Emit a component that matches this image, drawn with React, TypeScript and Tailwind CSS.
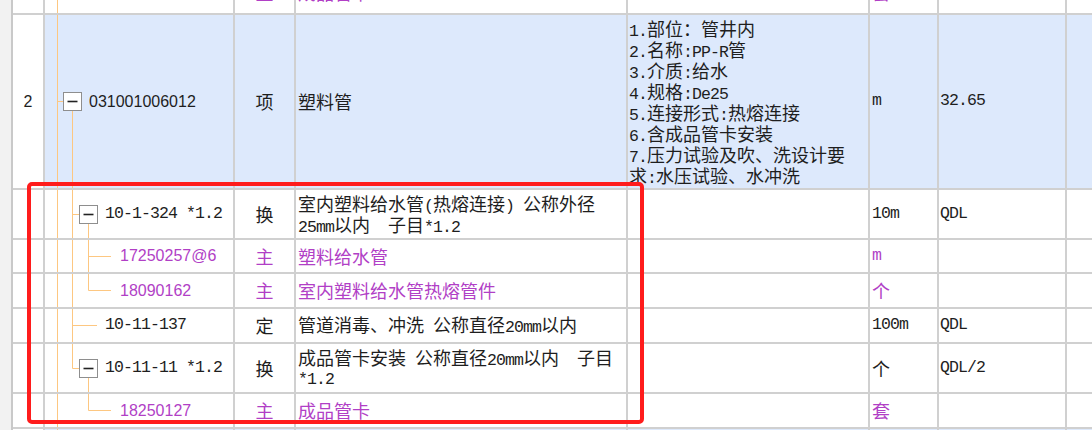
import React from 'react';

const PURPLE = 'text-[#b13fc6]';
const INK = 'text-[#1e1e1e]';
const MONO = "font-['Liberation_Mono',monospace] text-[16.5px] tracking-[-0.9px]";
const SANS = "font-['Liberation_Sans',Arial,sans-serif] text-[16px]";
const CJK = "font-['Noto_Sans_CJK_SC',sans-serif] text-[18px]";
const LINE = '#fdc781';

// ascii runs in SimSun-like mono, everything else in the CJK face
function Mix({ text }: { text: string }) {
    const parts = text.match(/[\x00-\x7f]+|[^\x00-\x7f]+/g) ?? [];
    return (
        <>
            {parts.map((p, i) => (
                <span key={i} className={/^[\x00-\x7f]/.test(p) ? MONO : CJK}>
                    {p}
                </span>
            ))}
        </>
    );
}

type V = [number, 'full' | 'top' | 'bottom'];
type TreeProps = {
    w: number;
    h: number;
    v?: V[];
    hz?: [number, number];
    box?: number;
    children?: React.ReactNode;
};

function Tree({ w, h, v = [], hz, box, children }: TreeProps) {
    const c = Math.floor(h / 2) + 0.5;
    return (
        <div className="flex items-center h-full">
            <svg width={w} height={h} className="shrink-0">
                {v.map(([x, kind], i) => {
                    const y1 = kind === 'bottom' ? c + 9 : 0;
                    const y2 = kind === 'top' ? c : h;
                    return <line key={i} x1={x} x2={x} y1={y1} y2={y2} stroke={LINE} strokeWidth={1} />;
                })}
                {hz && <line x1={hz[0]} x2={hz[1]} y1={c} y2={c} stroke={LINE} strokeWidth={1} />}
                {box !== undefined && (
                    <g>
                        <rect x={box - 9} y={c - 9} width={18} height={18} fill="#fff" stroke="#8e8e8e" strokeWidth={1} />
                        <line x1={box - 5} x2={box + 5} y1={c} y2={c} stroke="#222" strokeWidth={1.6} />
                    </g>
                )}
            </svg>
            {children}
        </div>
    );
}

type RowProps = {
    h: string;
    blue?: boolean;
    extra?: string;
    num?: React.ReactNode;
    tree: React.ReactNode;
    type?: React.ReactNode;
    desc?: React.ReactNode;
    feat?: React.ReactNode;
    unit?: React.ReactNode;
    qty?: React.ReactNode;
};

function Row({ h, blue, extra = '', num, tree, type, desc, feat, unit, qty }: RowProps) {
    const bg = blue ? 'bg-[#dde9fc]' : 'bg-white';
    const cell = `h-full border-r-2 border-[#d0d0d0] ${bg}`;
    return (
        <div className={`flex shrink-0 border-b-2 border-[#d0d0d0] ${h} ${extra}`}>
            <div className={`w-[32px] shrink-0 h-full border-r-2 border-[#d0d0d0] bg-white flex items-center justify-center ${SANS} ${INK}`}>
                {num}
            </div>
            <div className={`w-[190px] shrink-0 ${cell}`}>{tree}</div>
            <div className={`w-[61px] shrink-0 flex items-center justify-center ${cell} ${CJK}`}>{type}</div>
            <div className={`w-[332px] shrink-0 flex items-center pl-[2px] leading-[21px] ${cell}`}>{desc}</div>
            <div className={`w-[242px] shrink-0 flex items-center pl-[1px] leading-[21px] ${cell}`}>{feat}</div>
            <div className={`w-[69px] shrink-0 flex items-center pl-[2px] ${cell}`}>{unit}</div>
            <div className={`w-[128px] shrink-0 flex items-center pl-[1px] ${cell} ${MONO} ${INK}`}>{qty}</div>
            <div className={`flex-1 h-full ${bg}`} />
        </div>
    );
}

const FEATURES = [
    '1.部位：管井内',
    '2.名称:PP-R管',
    '3.介质:给水',
    '4.规格:De25',
    '5.连接形式:热熔连接',
    '6.含成品管卡安装',
    '7.压力试验及吹、洗设计要',
    '求:水压试验、水冲洗',
];

export default function App() {
    return (
        <div className="relative w-[1092px] h-[430px] overflow-hidden bg-white flex">
            <div className="w-[13px] shrink-0 h-full bg-[#f2f2f2] border-r-2 border-[#c9c9c9]" />

            <div className="flex-1 flex flex-col">
                <Row
                    h="h-[43px]"
                    extra="-mt-[28px]"
                    tree={
                        <Tree w={75} h={41} v={[[12.5, 'full']]}>
                            <span className={`${SANS} ${PURPLE}`}>18250127</span>
                        </Tree>
                    }
                    type={<span className={PURPLE}>主</span>}
                    desc={<span className={`${CJK} ${PURPLE}`}>成品管卡</span>}
                    unit={<span className={`${CJK} ${PURPLE}`}>套</span>}
                />

                <Row
                    h="h-[175px]"
                    blue
                    num="2"
                    tree={
                        <Tree w={44} h={173} v={[[12.5, 'full'], [27.5, 'bottom']]} hz={[12.5, 18.5]} box={27.5}>
                            <span className={`${SANS} ${INK}`}>031001006012</span>
                        </Tree>
                    }
                    type={<span className={INK}>项</span>}
                    desc={<span className={`${CJK} ${INK}`}>塑料管</span>}
                    feat={
                        <div className={`flex flex-col whitespace-nowrap ${INK}`}>
                            {FEATURES.map((f) => (
                                <div key={f} className="h-[21px] leading-[21px]">
                                    <Mix text={f} />
                                </div>
                            ))}
                        </div>
                    }
                    unit={<span className={`${MONO} ${INK}`}>m</span>}
                    qty="32.65"
                />

                <Row
                    h="h-[50px]"
                    tree={
                        <Tree w={60} h={48} v={[[12.5, 'full'], [27.5, 'full'], [43.5, 'bottom']]} hz={[27.5, 34.5]} box={43.5}>
                            <span className={`${MONO} ${INK}`}>10-1-324 *1.2</span>
                        </Tree>
                    }
                    type={<span className={INK}>换</span>}
                    desc={
                        <div className={`flex flex-col whitespace-nowrap ${INK}`}>
                            <div className="h-[21px]">
                                <Mix text="室内塑料给水管(热熔连接) 公称外径" />
                            </div>
                            <div className="h-[21px]">
                                <Mix text="25mm以内　子目*1.2" />
                            </div>
                        </div>
                    }
                    unit={<span className={`${MONO} ${INK}`}>10m</span>}
                    qty="QDL"
                />

                <Row
                    h="h-[34px]"
                    tree={
                        <Tree w={75} h={32} v={[[12.5, 'full'], [27.5, 'full'], [43.5, 'full']]} hz={[43.5, 66]}>
                            <span className={`${SANS} ${PURPLE}`}>17250257@6</span>
                        </Tree>
                    }
                    type={<span className={PURPLE}>主</span>}
                    desc={<span className={`${CJK} ${PURPLE}`}>塑料给水管</span>}
                    unit={<span className={`${MONO} ${PURPLE}`}>m</span>}
                />

                <Row
                    h="h-[35px]"
                    tree={
                        <Tree w={75} h={33} v={[[12.5, 'full'], [27.5, 'full'], [43.5, 'top']]} hz={[43.5, 66]}>
                            <span className={`${SANS} ${PURPLE}`}>18090162</span>
                        </Tree>
                    }
                    type={<span className={PURPLE}>主</span>}
                    desc={<span className={`${CJK} ${PURPLE}`}>室内塑料给水管热熔管件</span>}
                    unit={<span className={`${CJK} ${PURPLE}`}>个</span>}
                />

                <Row
                    h="h-[35px]"
                    tree={
                        <Tree w={60} h={33} v={[[12.5, 'full'], [27.5, 'full']]} hz={[27.5, 52]}>
                            <span className={`${MONO} ${INK}`}>10-11-137</span>
                        </Tree>
                    }
                    type={<span className={INK}>定</span>}
                    desc={
                        <span className={`whitespace-nowrap ${INK}`}>
                            <Mix text="管道消毒、冲洗 公称直径20mm以内" />
                        </span>
                    }
                    unit={<span className={`${MONO} ${INK}`}>100m</span>}
                    qty="QDL"
                />

                <Row
                    h="h-[50px]"
                    tree={
                        <Tree w={60} h={48} v={[[12.5, 'full'], [27.5, 'top'], [43.5, 'bottom']]} hz={[27.5, 34.5]} box={43.5}>
                            <span className={`${MONO} ${INK}`}>10-11-11 *1.2</span>
                        </Tree>
                    }
                    type={<span className={INK}>换</span>}
                    desc={
                        <div className={`flex flex-col whitespace-nowrap ${INK}`}>
                            <div className="h-[21px]">
                                <Mix text="成品管卡安装 公称直径20mm以内　子目" />
                            </div>
                            <div className="h-[21px]">
                                <Mix text="*1.2" />
                            </div>
                        </div>
                    }
                    unit={<span className={`${CJK} ${INK}`}>个</span>}
                    qty="QDL/2"
                />

                <Row
                    h="h-[35px]"
                    tree={
                        <Tree w={75} h={33} v={[[12.5, 'full'], [43.5, 'top']]} hz={[43.5, 66]}>
                            <span className={`${SANS} ${PURPLE}`}>18250127</span>
                        </Tree>
                    }
                    type={<span className={PURPLE}>主</span>}
                    desc={<span className={`${CJK} ${PURPLE}`}>成品管卡</span>}
                    unit={<span className={`${CJK} ${PURPLE}`}>套</span>}
                />

                <Row h="h-[35px]" blue tree={<Tree w={20} h={33} v={[[12.5, 'full']]} />} />
            </div>

            <div className="absolute left-[27px] top-[182px] w-[617px] h-[242px] border-4 border-[#ff1c1c] rounded-[5px]" />
        </div>
    );
}
